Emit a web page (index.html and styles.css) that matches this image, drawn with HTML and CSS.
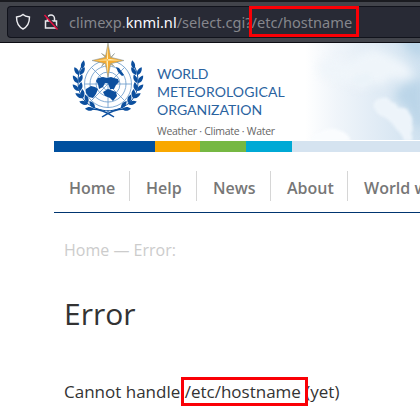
FILE: index.html
```html
<!DOCTYPE html>
<html lang="en">
<head>
<meta charset="utf-8">
<title>Error</title>
<link rel="stylesheet" href="styles.css">
</head>
<body>
<div class="toolbar">
  <div class="address">
    <svg class="shield" viewBox="0 0 16 18"><path d="M8 1.5C6.200 3.200 3.800 3.700 1.500 4c0 5.500 1.500 9.500 6.500 12 5-2.500 6.500-6.500 6.500-12C12.200 3.700 9.800 3.200 8 1.500z"/></svg>
    <svg class="lock" viewBox="0 0 16 18"><path class="ink" d="M4.500 8V5.500a3.500 3.500 0 0 1 7 0V8M2.500 8h11v7h-11z"/><path class="gap" d="M2.500 2 15 16"/><path class="slash" d="M1.500 2 14.500 16.500"/></svg>
    <div class="url"><span>climexp.</span><b>knmi.nl</b><span>/select.cgi?</span><span class="marked">/etc/hostname</span></div>
  </div>
</div>
<div class="page">
  <header class="banner">
    <svg class="emblem" viewBox="72 43 74 76">
      <defs>
        <path id="leaf" d="M0 0C-3-2-3-6-1-9 2-6 2-3 0 0z"/>
        <g id="branch">
          <path class="stem" d="M109 111C92 110 78 101 78 81c0-7 2-12 5-17"/>
          <use href="#leaf" transform="translate(82 69) rotate(18)"/>
          <use href="#leaf" transform="translate(79 75) rotate(-25)"/>
          <use href="#leaf" transform="translate(80 75) rotate(38)"/>
          <use href="#leaf" transform="translate(78 83) rotate(-28)"/>
          <use href="#leaf" transform="translate(79 83) rotate(27)"/>
          <use href="#leaf" transform="translate(79 91) rotate(-38)"/>
          <use href="#leaf" transform="translate(80 91) rotate(14)"/>
          <use href="#leaf" transform="translate(83 98) rotate(-52)"/>
          <use href="#leaf" transform="translate(83 98) rotate(2)"/>
          <use href="#leaf" transform="translate(88 104) rotate(-68)"/>
          <use href="#leaf" transform="translate(88 103) rotate(-12)"/>
          <use href="#leaf" transform="translate(94 109) rotate(-82)"/>
          <use href="#leaf" transform="translate(95 108) rotate(-32)"/>
          <path class="stem tail" d="M92 109c9 0 16 4 22 8"/>
        </g>
      </defs>
      <g class="grid">
        <circle cx="108" cy="84" r="23.500"/><circle cx="108" cy="84" r="18"/><circle cx="108" cy="84" r="12"/><circle cx="108" cy="84" r="6"/>
        <path d="M84.500 84h47M108 60.500v47M91.400 67.400l33.200 33.200M124.600 67.400l-33.200 33.200"/>
      </g>
      <g class="land">
        <path d="M96 81l2-3 5-1 4 1 4-1 3 1 4 1 1 3-3 3-2 4-4 0-2-6-3 0-2 4-4 2-1-5z"/>
        <path d="M86 89l5-3 4 1 3 2-2 5-3 4-4-1-3-4z"/>
        <path d="M103 92l5-3 8 3 1 4-4 5-3-3-5-2zM116 67l3 1 5 7-2 1-4-4z"/>
      </g>
      <use href="#branch"/><use href="#branch" transform="matrix(-1 0 0 1 216 0)"/>
      <path class="star small" d="M108 60 101.500 53.500 106 56 108 60 114.500 53.500 111 58 108 60 114.500 66.500 110 64 108 60 101.500 66.500 104 62z"/>
      <path class="star" d="M108 43l2.700 14.300L124 60.500l-13.300 3.200L108 77l-2.700-13.300L92 60.500l13.300-3.200z"/>
      <path class="facet" d="M108 46v28l-1.500-12zM95 60.500h26l-11-1.500z"/>
    </svg>
    <div class="brand">
      <div class="name first">WORLD</div>
      <div class="name second">METEOROLOGICAL</div>
      <div class="name third">ORGANIZATION</div>
      <div class="motto">Weather · Climate · Water</div>
    </div>
    <svg class="sky" viewBox="6 0 134 97" preserveAspectRatio="none">
      <defs>
        <linearGradient id="air"><stop offset="0" stop-color="#fff"/><stop offset=".18" stop-color="#fff"/><stop offset=".4" stop-color="#f0f5fa"/><stop offset=".7" stop-color="#e0ebf5"/><stop offset="1" stop-color="#d0e2f0"/></linearGradient>
        <filter id="soft" x="-30%" y="-30%" width="160%" height="160%" color-interpolation-filters="sRGB"><feGaussianBlur stdDeviation="5"/></filter>
        <filter id="edge" color-interpolation-filters="sRGB"><feGaussianBlur stdDeviation="1.500"/></filter>
      </defs>
      <path fill="url(#air)" d="M0 0h140v97H0z"/>
      <g filter="url(#soft)">
        <path fill="#bbd5e8" d="M118-6h28v22l-15-6zM124 42l20-6v50l-10-4-4-14-12-10-4-6z"/>
        <path fill="#eff5fa" d="M38 22l13-8 15 6 12-7 14-7 16 5 17 9 10 12-12 5-12-2-9 8-10-3-10 7-10-6-11-3-18-3z"/>
      </g>
      <g filter="url(#edge)">
        <path fill="#edf4fa" d="M93 62q2-7 9-7 6-2 9 4 6 1 7 6 10-1 11 5 4 3 3 12 2 3-1 9 2 2 1 7h-8q-2-7-8-12-4-7-12-12-8-2-11-12z"/>
        <path fill="#fafcfe" d="M30 98q2-8 11-9 9-6 17-2 10 2 13 11z"/>
        <path fill="#ebf3f9" d="M72 38q3-8 9-6 6-5 10 1 4 6-3 8-10 5-16-3z"/>
      </g>
    </svg>
  </header>
  <div class="stripe"><i class="navy"></i><i class="amber"></i><i class="green"></i><i class="cyan"></i><i class="pale"></i></div>
  <nav class="menu"><a class="home">Home</a><a class="help">Help</a><a class="news">News</a><a class="about">About</a><a class="world">World weather</a></nav>
  <main>
    <p class="crumbs">Home — Error:</p>
    <h1>Error</h1>
    <p class="message">Cannot handle <span class="marked">/etc/hostname</span> (yet)</p>
  </main>
</div>
</body>
</html>
```
FILE: styles.css
```css
*, *::after { box-sizing: border-box; }
html { overflow: hidden; }
body { margin: 0; width: 420px; height: 419px; overflow: hidden; background: #fff; font-family: "Open Sans", sans-serif; }
.toolbar { height: 43px; padding: 4px 0 0 7px; background: #42444b; border-top: 2px solid #1a1b20; border-bottom: 1px solid #0c0c13; }
.address { height: 32px; display: flex; align-items: center; border: 1px solid #11131c; border-right: 0; border-radius: 4px 0 0 4px; background: #282a35; }
.shield { width: 16px; height: 18px; margin-left: 7px; fill: none; stroke: #eeeef2; stroke-width: 1.4; }
.lock { width: 16px; height: 18px; margin-left: 12px; fill: none; stroke-width: 1.5; }
.ink { stroke: #e9e9ed; }
.gap { stroke: #282a35; stroke-width: 2; }
.slash { stroke: #e80f42; }
.url { margin-left: 10px; font: 14.6px/30px "Noto Sans", sans-serif; color: #85868c; white-space: nowrap; }
.url b { font-weight: 400; color: #fbfbfe; }
.marked { position: relative; }
.marked::after { content: ""; position: absolute; border: 3px solid #fa0006; }
.url .marked::after { left: -3px; top: -6px; width: 110px; height: 31px; }
.page { margin-left: 54px; }
.banner { display: flex; height: 97px; }
.emblem { width: 74px; height: 76px; margin-left: 18px; flex: none; }
.grid { fill: none; stroke: #6597c9; stroke-width: .8; }
.land, #leaf { fill: #0c4f9e; }
.stem { fill: none; stroke: #0c4f9e; stroke-width: 1; }
.tail { stroke-width: 1.5; }
.star { fill: #f5ac32; stroke: #8c9b9d; stroke-width: .6; }
.facet { fill: #fff0b8; }
.brand { width: 140px; padding: 22px 0 0 11px; color: #2a639f; white-space: nowrap; flex: none; }
.name { font: 14px/18px Lato, sans-serif; }
.first { letter-spacing: -.2px; }
.second { letter-spacing: .1px; }
.motto { font: 10.5px/13px "Open Sans", sans-serif; letter-spacing: -.28px; margin-top: 6px; color: #666; }
.sky { width: 134px; height: 97px; flex: none; }
.stripe { display: grid; grid-template-columns: 101px 45px 46px 46px 1fr; height: 12px; padding-top: 1px; }
.navy { background: #00509f; }
.amber { background: #f9a800; }
.green { background: #76b843; }
.cyan { background: #00a9d5; }
.pale { background: #d5e3f0; }
.menu { height: 61px; padding-top: 19px; display: flex; border-bottom: 1px solid #003570; overflow: hidden; }
.menu a { flex: none; height: 30px; border-right: 1px solid #d6d6d6; font-size: 16px; font-weight: 600; line-height: 34px; color: #777; padding-left: 16px; white-space: nowrap; }
.menu .home { width: 76px; padding-left: 15px; }
.help { width: 67px; }
.news { width: 74px; }
.about { width: 77px; }
main { padding-left: 10px; }
p, h1 { margin: 0; font-weight: 400; white-space: nowrap; }
.crumbs { margin-top: 25px; font-size: 16px; line-height: 24px; color: #ccc; }
h1 { margin-top: 32px; font-size: 30px; line-height: 40px; color: #333; }
.message { margin-top: 45px; font-size: 17px; line-height: 26px; color: #333; }
.message .marked::after { left: -4px; top: -3px; width: 127px; height: 29px; }
```
